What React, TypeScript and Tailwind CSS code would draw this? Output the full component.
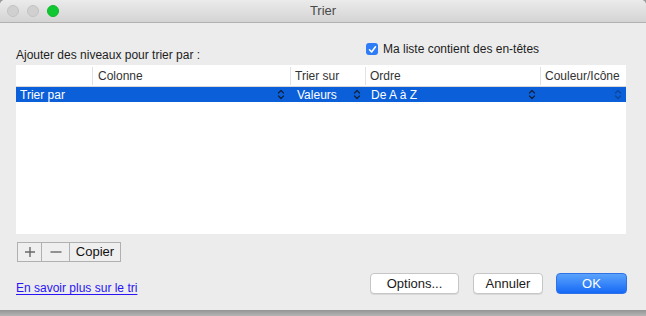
import React from "react";

const Chev = ({ faded = false }: { faded?: boolean }) => (
  <svg width="8" height="11" viewBox="0 0 8 11" className={faded ? "opacity-40" : ""}>
    <path d="M1.5 4 L4 1.5 L6.5 4 M1.5 7 L4 9.5 L6.5 7" stroke="#10243f" strokeWidth="1.3" fill="none" strokeLinecap="round" strokeLinejoin="round" />
  </svg>
);

export default function App() {
  return (
    <div className="w-[646px] h-[316px] relative overflow-hidden bg-[#9a9a9a]" style={{ fontFamily: '"Liberation Sans", Arial, sans-serif' }}>
      <div className="absolute inset-x-0 bottom-0 h-[8px] bg-gradient-to-b from-[#8a8a8a] to-[#b5b5b5]" />
      <div className="relative w-[646px] h-[310px] bg-[#ececec] rounded-t-[5px] flex flex-col text-[12px] text-[#1d1d1d]">
        {/* title bar */}
        <div className="h-[23px] rounded-t-[5px] bg-gradient-to-b from-[#ebebeb] to-[#d4d4d4] border-b border-[#b1b1b1] flex items-center relative">
          <div className="flex gap-[8px] pl-[7px]">
            <div className="w-[12px] h-[12px] rounded-full bg-[#d0d0d0] border border-[#c3c3c3]" />
            <div className="w-[12px] h-[12px] rounded-full bg-[#d0d0d0] border border-[#c3c3c3]" />
            <div className="w-[12px] h-[12px] rounded-full bg-[#10c932] border border-[#0fb52a]" />
          </div>
          <div className="absolute inset-0 flex items-center justify-center text-[13px] text-[#4a4a4a]">Trier</div>
        </div>

        <div className="px-[16px] flex flex-col">
          <div className="flex h-[42px] items-start">
            <div className="pt-[23px] w-[350px]">Ajouter des niveaux pour trier par :</div>
            <div className="flex items-center gap-[5px] pt-[17px]">
              <div className="w-[12px] h-[12px] rounded-[3px] bg-[#2e7cf6] flex items-center justify-center">
                <svg width="9" height="9" viewBox="0 0 9 9"><path d="M1.5 4.8 L3.6 7 L7.5 1.8" stroke="white" strokeWidth="1.6" fill="none" strokeLinecap="round" strokeLinejoin="round" /></svg>
              </div>
              <span>Ma liste contient des en-têtes</span>
            </div>
          </div>

          {/* table */}
          <div className="w-[610px] h-[169px] bg-white flex flex-col">
            <div className="h-[22px] flex items-center border-b border-[#d9d9d9] text-[#333]">
              <div className="w-[76px] h-full" />
              <div className="w-[198px] h-[18px] border-l border-[#e2e2e2] pl-[5px] flex items-center">Colonne</div>
              <div className="w-[75px] h-[18px] border-l border-[#e2e2e2] pl-[4px] flex items-center">Trier sur</div>
              <div className="w-[175px] h-[18px] border-l border-[#e2e2e2] pl-[4px] flex items-center">Ordre</div>
              <div className="flex-1 h-[18px] border-l border-[#e2e2e2] pl-[4px] flex items-center">Couleur/Icône</div>
            </div>
            <div className="h-[15px] bg-[#0b5fd9] text-white flex items-center">
              <div className="w-[273px] pl-[4px] pr-[4px] flex items-center justify-between">
                <span>Trier par</span>
                <Chev />
              </div>
              <div className="w-[76px] pl-[8px] pr-[4px] flex items-center justify-between">
                <span>Valeurs</span>
                <Chev />
              </div>
              <div className="w-[175px] pl-[6px] pr-[4px] flex items-center justify-between">
                <span>De A à Z</span>
                <Chev />
              </div>
              <div className="flex-1 pr-[4px] flex items-center justify-end">
                <Chev faded />
              </div>
            </div>
          </div>

          {/* + - Copier */}
          <div className="flex mt-[8px] ml-[1px] h-[20px]">
            <div className="w-[25px] border border-[#b0b0b0] bg-[#efefef] flex items-center justify-center">
              <svg width="12" height="12" viewBox="0 0 12 12"><path d="M6 1 V11 M1 6 H11" stroke="#6a6a6a" strokeWidth="1.4" /></svg>
            </div>
            <div className="w-[28px] border-y border-r border-[#b0b0b0] bg-[#efefef] flex items-center justify-center">
              <svg width="14" height="12" viewBox="0 0 14 12"><path d="M1.5 6 H12.5" stroke="#6a6a6a" strokeWidth="1.4" /></svg>
            </div>
            <div className="w-[51px] border-y border-r border-[#b0b0b0] bg-[#efefef] flex items-center justify-center text-[13px] text-[#111]">Copier</div>
          </div>

          <div className="flex justify-between items-start mt-[11px]">
            <a className="mt-[6px] text-[#2a14f5] underline underline-offset-[2px] decoration-[1px]">En savoir plus sur le tri</a>
            <div className="flex items-center gap-[14px] mr-[3px]">
              <div className="w-[89px] h-[21px] bg-white border border-[#c6c6c6] rounded-[4px] shadow-[0_1px_0_rgba(0,0,0,0.08)] flex items-center justify-center text-[13px] text-[#1a1a1a]">Options...</div>
              <div className="w-[70px] h-[21px] bg-white border border-[#c6c6c6] rounded-[4px] shadow-[0_1px_0_rgba(0,0,0,0.08)] flex items-center justify-center text-[13px] text-[#1a1a1a] mr-[-1px]">Annuler</div>
              <div className="w-[71px] h-[21px] rounded-[4px] bg-gradient-to-b from-[#5aa2fb] to-[#1468f6] border border-[#2f72e6] flex items-center justify-center text-[13px] text-white">OK</div>
            </div>
          </div>
        </div>
      </div>
    </div>
  );
}
